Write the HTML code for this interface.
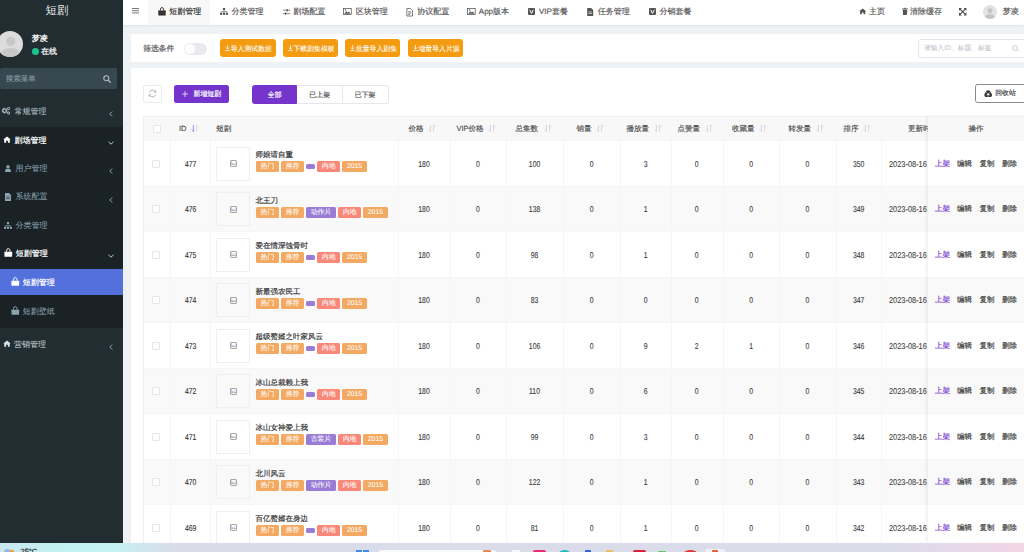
<!DOCTYPE html>
<html><head><meta charset="utf-8"><style>
*{margin:0;padding:0;box-sizing:border-box}
html,body{width:1024px;height:552px;overflow:hidden}
body{position:relative;text-rendering:geometricPrecision;-webkit-text-stroke-width:0.18px;background:#eff2f5;font-family:"Liberation Sans",sans-serif;color:#555}
.a{position:absolute}
.t{position:absolute;white-space:nowrap;line-height:1}
svg{position:absolute;overflow:visible}
/* sidebar */
#sb{position:absolute;left:0;top:0;width:123px;height:543px;background:#222d32}
#sb .logo{left:45.5px;top:6.2px;font-size:11.4px;color:#e8eaeb;-webkit-text-stroke-width:0}
#sb .av{left:-3px;top:31px;width:26px;height:26px;border-radius:50%;background:#dcdcdc;overflow:hidden}
#sb .uname{left:31.7px;top:34.8px;font-size:8px;color:#fff;-webkit-text-stroke-width:0.25px}
#sb .dot{position:absolute;left:32px;top:47.5px;width:7px;height:7px;border-radius:50%;background:#1fc28f}
#sb .online{left:41px;top:47.8px;font-size:8px;color:#fff}
#sb .search{position:absolute;left:0;top:68px;width:117px;height:21px;background:#374850;border-radius:2px}
#sb .ph{left:6px;top:6.8px;font-size:7.4px;color:#7f939b}
.mi{font-size:8px;color:#8aa4af;-webkit-text-stroke-width:0.05px}
.mi.w{color:#fff;-webkit-text-stroke-width:0.2px}
#sb .dark{position:absolute;left:0;top:126.5px;width:123px;height:201.5px;background:#1a2226}
#sb .actbg{position:absolute;left:0;top:269px;width:123px;height:25.6px;background:#5470dc}
/* topbar */
#tb{position:absolute;left:123px;top:0;width:901px;height:25px;background:#fff;box-shadow:0 0.6px 2.2px rgba(0,0,0,.11)}
#tb .acttab{position:absolute;left:25.2px;top:0;width:62px;height:25px;background:#f8f8f8}
.nv{font-size:8px;color:#5a5a5a;top:8.1px}
.nv.d{color:#333}
/* cards */
.card{position:absolute;background:#fff;border-radius:2px}
.obtn{position:absolute;top:39px;height:18.3px;background:#f39c12;border-radius:3px;color:#fff;-webkit-text-stroke-width:0.08px}
.toggle{position:absolute;left:184px;top:43px;width:23px;height:11.5px;border-radius:6px;background:#e8eaee}
.toggle b{position:absolute;left:1px;top:1px;width:9.5px;height:9.5px;border-radius:50%;background:#fff}
.sinp{position:absolute;left:917.6px;top:39px;width:120px;height:19px;border:1px solid #e2e5ec;border-radius:3px;background:#fff}
.sinp .t{left:5.5px;top:5.7px;font-size:6.75px;color:#bfc3cb;-webkit-text-stroke-width:0.05px}
/* toolbar */
.rbtn{position:absolute;left:143.4px;top:84.5px;width:18.2px;height:18.2px;border:1px solid #ececec;border-radius:2px;background:#fff}
.abtn{position:absolute;left:173.7px;top:84.7px;width:55.3px;height:18.3px;background:#7535cc;border-radius:2.5px;color:#fff}
.seg{position:absolute;top:85px;height:18.5px;font-size:6.9px;line-height:19.6px;text-align:center;border:1px solid #e6e7ec;background:#fff;color:#5a5a5a}
.seg.on{background:#7535cc;border-color:#7535cc;color:#fff}
.recbtn{position:absolute;left:974.5px;top:84.4px;width:60px;height:18.4px;border:0.8px solid #8a8a8a;border-radius:2.5px;background:#fff}
/* table */
#tbl{position:absolute;left:143px;top:116px;width:900px;height:427px;overflow:hidden}
.hdr{position:absolute;left:0;top:0;width:900px;height:24.3px;background:#f8f8f9;border-top:1px solid #eff1f6}
.hdr .vb{top:0;height:24.3px}
.ht{position:absolute;top:8.1px;font-size:7.5px;line-height:1;color:#555;white-space:nowrap}
.row{position:absolute;left:0;width:900px;height:45.5px;border-top:0.5px solid #f6f6f8}
.vb{position:absolute;top:0;width:0.6px;height:100%;background:#f5f6f9}
.cb{position:absolute;width:8.2px;height:8.2px;border:0.8px solid #e4e6ec;border-radius:1px;background:#fff}
.num{position:absolute;top:18.3px;font-size:8.5px;line-height:1;text-align:center;color:#3a3a3a;transform:scaleX(0.81);-webkit-text-stroke-width:0.1px}
.idn{color:#333}
.thumb{position:absolute;top:5.6px;width:34px;height:34px;border:0.8px solid #efefef;background:transparent}
.ttl{position:absolute;left:112.5px;top:9.9px;font-size:7.5px;line-height:1;color:#333;white-space:nowrap}
.tags{position:absolute;left:113px;top:19.9px;height:11px;white-space:nowrap;font-size:0}
.tg{display:inline-block;vertical-align:top;height:11px;line-height:11px;padding:0 4.6px;margin-right:2.1px;font-size:6.9px;font-style:normal;color:#fff;border-radius:1.5px;-webkit-text-stroke-width:0.05px}
.tg.o{background:#f3a961}
.tg.r{background:#f98878}
.tg.p{background:#9a7cd6}
.tg.pe{background:#9a7cd6;width:9px;height:4.8px;margin-top:3.1px;padding:0;border-radius:1.5px}
.date{position:absolute;left:746.4px;top:18.3px;font-size:8.5px;line-height:1;color:#444;transform:scaleX(0.87);transform-origin:0 0;-webkit-text-stroke-width:0.1px;white-space:nowrap}
#fix{position:absolute;left:927.6px;top:116px;width:120px;height:427px;overflow:hidden;box-shadow:-2px 0 3px rgba(0,0,0,.06)}
.frow{position:absolute;left:0;width:120px;height:45.5px;border-top:0.5px solid #f6f6f8}
.act{position:absolute;top:18.6px;font-size:7.5px;line-height:1;color:#444;white-space:nowrap}
.act.up{color:#7535cc}
/* taskbar */
#task{position:absolute;left:0;top:543.3px;width:1024px;height:9px;overflow:hidden;background:linear-gradient(90deg,#c7e8ee 0%,#c3f3f4 7%,#c4f2f3 11%,#cfe6ee 14%,#d9dce8 17%,#dadde9 50%,#dadce9 86%,#e3d9ea 92%,#f3d5e5 100%);box-shadow:0 -0.5px 1px rgba(0,0,0,.25)}
#task i{position:absolute;display:block}
.bimg{position:absolute;left:13.3px;top:12.8px;width:6px;height:6px;border:0.8px solid #9a9a9a;border-radius:0.5px}
.bimg:after{content:"";position:absolute;left:0.6px;top:2.6px;width:3.6px;height:0;border-top:0.8px solid #9a9a9a}
#tbl:before{content:"";position:absolute;left:0;top:0;width:0.7px;height:100%;background:#eceef3;z-index:5}

</style></head><body>
<div id="sb">
  <div class="t logo">短剧</div>
  <div class="av a"><svg width="26" height="26" viewBox="0 0 26 26" style="left:0;top:0"><circle cx="13.7" cy="10.5" r="4.6" fill="#c8c8c8"/><ellipse cx="13.7" cy="24" rx="10" ry="7" fill="#c8c8c8"/></svg></div>
  <div class="t uname">梦凌</div>
  <span class="dot"></span><div class="t online">在线</div>
  <div class="search"><span class="t ph">搜索菜单</span>
    <svg width="8" height="8" style="left:103px;top:6.5px" viewBox="0 0 8 8"><circle cx="3.3" cy="3.3" r="2.5" fill="none" stroke="#b0b8bc" stroke-width="1.1"/><path d="M5.2 5.2 L7.3 7.3" stroke="#b0b8bc" stroke-width="1.3" stroke-linecap="round"/></svg>
  </div>
  <div class="dark"></div>
  <div class="actbg"></div>
  <!-- 常规管理 -->
  <svg width="8" height="7" style="left:2px;top:107px" viewBox="0 0 8 7"><circle cx="2.6" cy="3.6" r="2.1" fill="none" stroke="#c0ccd2" stroke-width="1.4" stroke-dasharray="0.9 0.35"/><circle cx="2.6" cy="3.6" r="1.5" fill="none" stroke="#c0ccd2" stroke-width="0.6"/><circle cx="6.6" cy="1.5" r="1.1" fill="none" stroke="#b8c7ce" stroke-width="1"/><circle cx="6.6" cy="6" r="1.1" fill="none" stroke="#b8c7ce" stroke-width="1"/></svg>
  <div class="t mi" style="left:14.5px;top:107.6px;color:#b8c7ce">常规管理</div>
  <svg width="4" height="6" style="left:108.5px;top:110.5px" viewBox="0 0 4 6"><path d="M3.2 0.5 L0.8 3 L3.2 5.5" fill="none" stroke="#8aa4af" stroke-width="1"/></svg>
  <!-- 剧场管理 -->
  <svg width="8" height="7" style="left:2.5px;top:136px" viewBox="0 0 8 7"><path d="M0.3 3.6 L4 0.4 L7.7 3.6 L6.8 3.6 L6.8 6.8 L4.9 6.8 L4.9 4.8 L3.1 4.8 L3.1 6.8 L1.2 6.8 L1.2 3.6Z" fill="#fff"/></svg>
  <div class="t mi w" style="left:14.5px;top:136.5px">剧场管理</div>
  <svg width="6" height="4" style="left:107.5px;top:140.5px" viewBox="0 0 6 4"><path d="M0.5 0.8 L3 3.2 L5.5 0.8" fill="none" stroke="#b8c7ce" stroke-width="1"/></svg>
  <!-- 用户管理 -->
  <svg width="6" height="7" style="left:4.5px;top:165px" viewBox="0 0 6 7"><circle cx="3" cy="1.8" r="1.7" fill="#8aa4af"/><path d="M0 7 C0 4 1 3.7 3 3.7 C5 3.7 6 4 6 7Z" fill="#8aa4af"/></svg>
  <div class="t mi" style="left:15.6px;top:164.5px">用户管理</div>
  <svg width="4" height="6" style="left:108.5px;top:168.0px" viewBox="0 0 4 6"><path d="M3.2 0.5 L0.8 3 L3.2 5.5" fill="none" stroke="#8aa4af" stroke-width="1"/></svg>
  <!-- 系统配置 -->
  <svg width="6" height="8" style="left:4.5px;top:192.5px" viewBox="0 0 6 8"><path d="M0 0 H4 L6 2 V8 H0Z" fill="#8aa4af"/><path d="M1.2 4 H4.8 M1.2 5.6 H4.8" stroke="#1a2226" stroke-width="0.6"/></svg>
  <div class="t mi" style="left:15.6px;top:193px">系统配置</div>
  <svg width="4" height="6" style="left:108.5px;top:196.5px" viewBox="0 0 4 6"><path d="M3.2 0.5 L0.8 3 L3.2 5.5" fill="none" stroke="#8aa4af" stroke-width="1"/></svg>
  <!-- 分类管理 -->
  <svg width="8" height="7" style="left:3.5px;top:222px" viewBox="0 0 8 7"><rect x="2.9" y="0" width="2.2" height="2" fill="#8aa4af"/><path d="M4 2 V3.6 M1.2 4.8 V3.6 H6.8 V4.8 M4 3.6 V4.8" stroke="#8aa4af" stroke-width="0.6" fill="none"/><rect x="0" y="4.8" width="2.2" height="2" fill="#8aa4af"/><rect x="2.9" y="4.8" width="2.2" height="2" fill="#8aa4af"/><rect x="5.8" y="4.8" width="2.2" height="2" fill="#8aa4af"/></svg>
  <div class="t mi" style="left:15.6px;top:221.5px">分类管理</div>
  <!-- 短剧管理 parent -->
  <svg width="8.6" height="9" style="left:3.6px;top:248.3px" viewBox="0 0 8 8.6"><path d="M0.2 3.6 H7.8 L7.6 8.4 H0.4Z" fill="#fff"/><path d="M2.2 3.6 L2.7 1.2 Q4 -0.2 5.3 1.2 L5.8 3.6" fill="none" stroke="#fff" stroke-width="0.9"/></svg>
  <div class="t mi w" style="left:15.8px;top:249.5px">短剧管理</div>
  <svg width="6" height="4" style="left:107.5px;top:253.5px" viewBox="0 0 6 4"><path d="M0.5 0.8 L3 3.2 L5.5 0.8" fill="none" stroke="#b8c7ce" stroke-width="1"/></svg>
  <!-- active -->
  <svg width="8.6" height="9" style="left:10.6px;top:277.4px" viewBox="0 0 8 8.6"><path d="M0.2 3.6 H7.8 L7.6 8.4 H0.4Z" fill="#fff"/><path d="M2.2 3.6 L2.7 1.2 Q4 -0.2 5.3 1.2 L5.8 3.6" fill="none" stroke="#fff" stroke-width="0.9"/></svg>
  <div class="t mi w" style="left:22.8px;top:279px">短剧管理</div>
  <!-- 短剧壁纸 -->
  <svg width="8.6" height="9" style="left:10.6px;top:306.4px" viewBox="0 0 8 8.6"><path d="M0.2 3.6 H7.8 L7.6 8.4 H0.4Z" fill="#8aa4af"/><path d="M2.2 3.6 L2.7 1.2 Q4 -0.2 5.3 1.2 L5.8 3.6" fill="none" stroke="#8aa4af" stroke-width="0.9"/></svg>
  <div class="t mi" style="left:22.8px;top:307.6px">短剧壁纸</div>
  <!-- 营销管理 -->
  <svg width="8" height="7" style="left:2.5px;top:340px" viewBox="0 0 8 7"><path d="M0.3 3.6 L4 0.4 L7.7 3.6 L6.8 3.6 L6.8 6.8 L4.9 6.8 L4.9 4.8 L3.1 4.8 L3.1 6.8 L1.2 6.8 L1.2 3.6Z" fill="#d8e0e4"/></svg>
  <div class="t mi" style="left:14px;top:340.5px;color:#c4d0d5">营销管理</div>
  <svg width="4" height="6" style="left:108.5px;top:343.5px" viewBox="0 0 4 6"><path d="M3.2 0.5 L0.8 3 L3.2 5.5" fill="none" stroke="#8aa4af" stroke-width="1"/></svg>
</div>

<div id="tb">
  <div class="acttab"></div>
  <svg width="8" height="6" style="left:9px;top:8.1px" viewBox="0 0 8 6"><path d="M0 0.5 H7 M0 2.7 H7 M0 4.9 H7" stroke="#606060" stroke-width="0.85"/></svg>
  <svg width="8" height="8.6" style="left:35px;top:6.6px" viewBox="0 0 8 8.6"><path d="M0.2 3.6 H7.8 L7.6 8.4 H0.4Z" fill="#2a2a2a"/><path d="M2.2 3.6 L2.7 1.2 Q4 -0.2 5.3 1.2 L5.8 3.6" fill="none" stroke="#2a2a2a" stroke-width="0.9"/><path d="M0.6 6.2 H7.4" stroke="#777" stroke-width="0.4"/></svg>
  <div class="t nv d" style="left:46.3px">短剧管理</div>
  <svg width="8" height="7" style="left:97px;top:8px" viewBox="0 0 8 7"><rect x="2.9" y="0" width="2.2" height="2" fill="#555"/><path d="M4 2 V3.6 M1.2 4.8 V3.6 H6.8 V4.8 M4 3.6 V4.8" stroke="#555" stroke-width="0.6" fill="none"/><rect x="0" y="4.8" width="2.2" height="2" fill="#555"/><rect x="2.9" y="4.8" width="2.2" height="2" fill="#555"/><rect x="5.8" y="4.8" width="2.2" height="2" fill="#555"/></svg>
  <div class="t nv" style="left:108.4px">分类管理</div>
  <svg width="7" height="6" style="left:159.6px;top:8.8px" viewBox="0 0 7 6"><path d="M0 1.2 H7 M0 4.6 H7" stroke="#555" stroke-width="0.7"/><path d="M4.2 0 V2.4 M2.6 3.4 V5.8" stroke="#555" stroke-width="1.2"/></svg>
  <div class="t nv" style="left:170.3px">剧场配置</div>
  <svg width="8.6" height="7" style="left:220.3px;top:8.3px" viewBox="0 0 9 7"><rect x="0.4" y="0.4" width="8.2" height="6.2" fill="none" stroke="#555" stroke-width="0.8"/><path d="M1.2 5.8 L3.5 3.2 L5 4.6 L6.2 3.6 L7.8 5.8Z" fill="#555"/><circle cx="2.6" cy="2" r="0.8" fill="#555"/></svg>
  <div class="t nv" style="left:232.8px">区块管理</div>
  <svg width="7.4" height="8.5" style="left:283.2px;top:7.5px" viewBox="0 0 7 9"><path d="M0.5 0.5 H4.5 L6.5 2.5 V8.5 H0.5Z" fill="none" stroke="#555" stroke-width="0.8"/><path d="M1.8 4 H5 M1.8 5.5 H5 M1.8 7 H4" stroke="#555" stroke-width="0.7"/></svg>
  <div class="t nv" style="left:294.3px">协议配置</div>
  <svg width="8.6" height="7" style="left:344.3px;top:8.3px" viewBox="0 0 9 7"><rect x="0.4" y="0.4" width="8.2" height="6.2" fill="none" stroke="#555" stroke-width="0.8"/><path d="M1.2 5.8 L3.5 3.2 L5 4.6 L6.2 3.6 L7.8 5.8Z" fill="#555"/><circle cx="2.6" cy="2" r="0.8" fill="#555"/></svg>
  <div class="t nv" style="left:355.8px">App版本</div>
  <svg width="7" height="7" style="left:405.2px;top:8.2px" viewBox="0 0 7 7"><rect x="0" y="0" width="7" height="7" rx="1" fill="#555"/><path d="M1.7 1.8 L3.5 5.4 L5.3 1.8" fill="none" stroke="#fff" stroke-width="1"/></svg>
  <div class="t nv" style="left:416px">VIP套餐</div>
  <svg width="6.4" height="8" style="left:464.4px;top:7.8px" viewBox="0 0 6 8"><path d="M0 0 H4 L6 2 V8 H0Z" fill="#555"/><path d="M1.2 4 H4.8 M1.2 5.6 H4.8" stroke="#fff" stroke-width="0.6"/></svg>
  <div class="t nv" style="left:474.7px">任务管理</div>
  <svg width="7" height="7" style="left:525.9px;top:8.2px" viewBox="0 0 7 7"><rect x="0" y="0" width="7" height="7" rx="1" fill="#555"/><path d="M1.7 1.8 L3.5 5.4 L5.3 1.8" fill="none" stroke="#fff" stroke-width="1"/></svg>
  <div class="t nv" style="left:536.6px">分销套餐</div>
  <!-- right -->
  <svg width="7.4" height="6.5" style="left:736.2px;top:7.9px" viewBox="0 0 8 7"><path d="M0.3 3.6 L4 0.4 L7.7 3.6 L6.8 3.6 L6.8 6.8 L4.9 6.8 L4.9 4.8 L3.1 4.8 L3.1 6.8 L1.2 6.8 L1.2 3.6Z" fill="#555"/></svg>
  <div class="t nv" style="left:746px">主页</div>
  <svg width="6" height="7" style="left:778.5px;top:8.3px" viewBox="0 0 6 7"><path d="M0 1 H6 M2 1 V0.3 H4 V1" stroke="#555" stroke-width="0.8" fill="none"/><path d="M0.7 1.8 H5.3 L4.9 7 H1.1Z" fill="#555"/></svg>
  <div class="t nv" style="left:787px">清除缓存</div>
  <svg width="7.4" height="7.4" style="left:835.8px;top:8.2px" viewBox="0 0 8 8"><path d="M0.6 0.6 L7.4 7.4 M7.4 0.6 L0.6 7.4" stroke="#444" stroke-width="1.1"/><path d="M0 0 H3 L0 3Z M8 0 H5 L8 3Z M0 8 H3 L0 5Z M8 8 H5 L8 5Z" fill="#444"/></svg>
  <div class="a" style="left:860.2px;top:4.9px;width:14px;height:14px;border-radius:50%;background:#e2e2e2;overflow:hidden"><svg width="14" height="14" viewBox="0 0 26 26" style="left:0;top:0"><circle cx="13" cy="10.5" r="4.6" fill="#c4c4c4"/><ellipse cx="13" cy="24" rx="10" ry="7" fill="#c4c4c4"/></svg></div>
  <div class="t nv" style="left:879.7px">梦凌</div>
</div>

<!-- card 1 -->
<div class="card" style="left:131px;top:34px;width:900px;height:28px"></div>
<div class="t" style="left:143.2px;top:44.6px;font-size:7.8px;color:#555">筛选条件</div>
<div class="toggle"><b></b></div>
<div class="obtn" style="left:220.2px;width:55.6px"><svg width="5" height="6" style="left:4.7px;top:6.2px" viewBox="0 0 5 6"><path d="M2.5 0 V4.2 M0.7 2.5 L2.5 4.2 L4.3 2.5 M0 5.6 H5" fill="none" stroke="#fff" stroke-width="0.7"/></svg><span class="t" style="left:10.5px;top:7.7px;font-size:6.87px">导入测试数据</span></div>
<div class="obtn" style="left:283px;width:55px"><svg width="5" height="6" style="left:4.7px;top:6.2px" viewBox="0 0 5 6"><path d="M2.5 0 V4.2 M0.7 2.5 L2.5 4.2 L4.3 2.5 M0 5.6 H5" fill="none" stroke="#fff" stroke-width="0.7"/></svg><span class="t" style="left:10.5px;top:7.7px;font-size:6.87px">下载剧集模板</span></div>
<div class="obtn" style="left:345.4px;width:55.1px"><svg width="5" height="6" style="left:4.7px;top:6.2px" viewBox="0 0 5 6"><path d="M2.5 0 V4.2 M0.7 2.5 L2.5 4.2 L4.3 2.5 M0 5.6 H5" fill="none" stroke="#fff" stroke-width="0.7"/></svg><span class="t" style="left:10.5px;top:7.7px;font-size:6.87px">批量导入剧集</span></div>
<div class="obtn" style="left:408px;width:55.4px"><svg width="5" height="6" style="left:4.7px;top:6.2px" viewBox="0 0 5 6"><path d="M2.5 0 V4.2 M0.7 2.5 L2.5 4.2 L4.3 2.5 M0 5.6 H5" fill="none" stroke="#fff" stroke-width="0.7"/></svg><span class="t" style="left:10.5px;top:7.7px;font-size:6.87px">增量导入片源</span></div>
<div class="sinp"><span class="t">请输入ID、标题、标签</span>
<svg width="7" height="7" style="left:93px;top:5.2px" viewBox="0 0 7 7"><circle cx="3" cy="3" r="2.4" fill="none" stroke="#c0c4cc" stroke-width="0.8"/><path d="M4.8 4.8 L6.5 6.5" stroke="#c0c4cc" stroke-width="0.8"/></svg></div>

<!-- card 2 -->
<div class="card" style="left:131px;top:68px;width:900px;height:480px"></div>
<div class="rbtn"><svg width="9" height="9" style="left:4px;top:3.6px" viewBox="0 0 9 9"><path d="M1.2 3.5 A3.5 3.5 0 0 1 7.6 3" fill="none" stroke="#a8a8a8" stroke-width="0.8"/><path d="M7.8 5.5 A3.5 3.5 0 0 1 1.4 6" fill="none" stroke="#a8a8a8" stroke-width="0.8"/><path d="M7.9 1.3 V3.3 H5.9" fill="none" stroke="#a8a8a8" stroke-width="0.8"/><path d="M1.1 7.7 V5.7 H3.1" fill="none" stroke="#a8a8a8" stroke-width="0.8"/></svg></div>
<div class="abtn"><svg width="6" height="6" style="left:8.8px;top:6.2px" viewBox="0 0 6 6"><path d="M3 0 V6 M0 3 H6" stroke="#fff" stroke-width="0.7"/></svg><span class="t" style="left:19.8px;top:7.4px;font-size:6.9px;color:#fff">新增短剧</span></div>
<div class="seg on" style="left:252px;width:45.4px;border-radius:2.5px 0 0 2.5px">全部</div>
<div class="seg" style="left:297.4px;width:45.6px;border-left:0">已上架</div>
<div class="seg" style="left:342.5px;width:46.2px;border-left:0;border-radius:0 2.5px 2.5px 0">已下架</div>
<div class="recbtn"><svg width="8.4" height="7.4" style="left:8.5px;top:4.9px" viewBox="0 0 10 8.8"><path d="M5 0.3 C6.5 0.3 7.2 1.3 8.2 3 C9.3 4.8 9.9 5.7 9.3 7 C8.7 8.3 7.5 8.3 5 8.3 C2.5 8.3 1.3 8.3 0.7 7 C0.1 5.7 0.7 4.8 1.8 3 C2.8 1.3 3.5 0.3 5 0.3Z" fill="#333"/><path d="M5 3.2 L7 6.4 H3Z" fill="#fff"/><path d="M2.2 2.6 L3.8 3.8 M7.8 2.6 L6.2 3.8 M5 9 V6.8" stroke="#fff" stroke-width="0.55"/></svg><span class="t" style="left:19.8px;top:5.4px;font-size:6.8px;color:#444">回收站</span></div>

<div id="tbl">
  <div class="hdr">
    <i class="vb" style="left:26.8px"></i><i class="vb" style="left:66.8px"></i><i class="vb" style="left:254.6px"></i><i class="vb" style="left:306.6px"></i><i class="vb" style="left:362.5px"></i><i class="vb" style="left:419.6px"></i><i class="vb" style="left:476.8px"></i><i class="vb" style="left:528px"></i><i class="vb" style="left:579.6px"></i><i class="vb" style="left:636px"></i><i class="vb" style="left:693px"></i><i class="vb" style="left:738.4px"></i>
    <span class="cb" style="left:9.5px;top:7.5px"></span>
    <span class="ht" style="left:36px">ID</span>
    <span class="ht" style="left:73.2px">短剧</span>
    <span class="ht" style="left:265.6px">价格</span>
    <span class="ht" style="left:313.5px">VIP价格</span>
    <span class="ht" style="left:372.6px">总集数</span>
    <span class="ht" style="left:433.5px">销量</span>
    <span class="ht" style="left:483.5px">播放量</span>
    <span class="ht" style="left:534.5px">点赞量</span>
    <span class="ht" style="left:589px">收藏量</span>
    <span class="ht" style="left:645.5px">转发量</span>
    <span class="ht" style="left:700.5px">排序</span>
    <span class="ht" style="left:765px">更新时间</span>
    <svg width="8" height="7" style="left:47.89999999999999px;top:8.4px" viewBox="0 0 8 7"><path d="M2.4 0 V6.6 L0.5 4.7" fill="none" stroke="#9a6ee0" stroke-width="0.8"/><path d="M5.6 6.6 V0 L7.5 1.9" fill="none" stroke="#cfcfd4" stroke-width="0.8"/></svg><svg width="8" height="7" style="left:285.2px;top:8.4px" viewBox="0 0 8 7"><path d="M2.4 0 V6.6 L0.5 4.7" fill="none" stroke="#cfcfd4" stroke-width="0.8"/><path d="M5.6 6.6 V0 L7.5 1.9" fill="none" stroke="#cfcfd4" stroke-width="0.8"/></svg><svg width="8" height="7" style="left:345.3px;top:8.4px" viewBox="0 0 8 7"><path d="M2.4 0 V6.6 L0.5 4.7" fill="none" stroke="#cfcfd4" stroke-width="0.8"/><path d="M5.6 6.6 V0 L7.5 1.9" fill="none" stroke="#cfcfd4" stroke-width="0.8"/></svg><svg width="8" height="7" style="left:401.09999999999997px;top:8.4px" viewBox="0 0 8 7"><path d="M2.4 0 V6.6 L0.5 4.7" fill="none" stroke="#cfcfd4" stroke-width="0.8"/><path d="M5.6 6.6 V0 L7.5 1.9" fill="none" stroke="#cfcfd4" stroke-width="0.8"/></svg><svg width="8" height="7" style="left:453.09999999999997px;top:8.4px" viewBox="0 0 8 7"><path d="M2.4 0 V6.6 L0.5 4.7" fill="none" stroke="#cfcfd4" stroke-width="0.8"/><path d="M5.6 6.6 V0 L7.5 1.9" fill="none" stroke="#cfcfd4" stroke-width="0.8"/></svg><svg width="8" height="7" style="left:510.90000000000003px;top:8.4px" viewBox="0 0 8 7"><path d="M2.4 0 V6.6 L0.5 4.7" fill="none" stroke="#cfcfd4" stroke-width="0.8"/><path d="M5.6 6.6 V0 L7.5 1.9" fill="none" stroke="#cfcfd4" stroke-width="0.8"/></svg><svg width="8" height="7" style="left:561.5999999999999px;top:8.4px" viewBox="0 0 8 7"><path d="M2.4 0 V6.6 L0.5 4.7" fill="none" stroke="#cfcfd4" stroke-width="0.8"/><path d="M5.6 6.6 V0 L7.5 1.9" fill="none" stroke="#cfcfd4" stroke-width="0.8"/></svg><svg width="8" height="7" style="left:616.1999999999999px;top:8.4px" viewBox="0 0 8 7"><path d="M2.4 0 V6.6 L0.5 4.7" fill="none" stroke="#cfcfd4" stroke-width="0.8"/><path d="M5.6 6.6 V0 L7.5 1.9" fill="none" stroke="#cfcfd4" stroke-width="0.8"/></svg><svg width="8" height="7" style="left:673.3px;top:8.4px" viewBox="0 0 8 7"><path d="M2.4 0 V6.6 L0.5 4.7" fill="none" stroke="#cfcfd4" stroke-width="0.8"/><path d="M5.6 6.6 V0 L7.5 1.9" fill="none" stroke="#cfcfd4" stroke-width="0.8"/></svg><svg width="8" height="7" style="left:720.0999999999999px;top:8.4px" viewBox="0 0 8 7"><path d="M2.4 0 V6.6 L0.5 4.7" fill="none" stroke="#cfcfd4" stroke-width="0.8"/><path d="M5.6 6.6 V0 L7.5 1.9" fill="none" stroke="#cfcfd4" stroke-width="0.8"/></svg>
  </div>
  <div class="row" style="top:24.3px;background:#fff"><i class="vb" style="left:26.80000000000001px"></i><i class="vb" style="left:66.80000000000001px"></i><i class="vb" style="left:254.60000000000002px"></i><i class="vb" style="left:306.6px"></i><i class="vb" style="left:362.5px"></i><i class="vb" style="left:419.6px"></i><i class="vb" style="left:476.79999999999995px"></i><i class="vb" style="left:528px"></i><i class="vb" style="left:579.6px"></i><i class="vb" style="left:636px"></i><i class="vb" style="left:693px"></i><i class="vb" style="left:738.4px"></i><span class="cb" style="left:9.199999999999989px;top:18.25px"></span><span class="num idn" style="left:27.5px;width:39.30000000000001px">477</span><span class="thumb" style="left:73px"><svg width="7" height="7" style="left:12.7px;top:12.3px" viewBox="0 0 7 7"><rect x="0.5" y="0.5" width="6" height="6" rx="0.6" fill="none" stroke="#8f8f8f" stroke-width="0.8"/><path d="M0.8 4.6 H6.2" stroke="#9a9a9a" stroke-width="0.7"/><path d="M1.6 1.4 V3.6 L3.4 3.6 M4.6 3.6 L5.6 2.2" fill="none" stroke="#8a9ad0" stroke-width="0.6"/></svg></span><span class="ttl">师娘请自重</span><span class="tags"><em class="tg o">热门</em><em class="tg o">推荐</em><em class="tg pe"></em><em class="tg r">内地</em><em class="tg o">2015</em></span><span class="num" style="left:254.60000000000002px;width:52.0px">180</span><span class="num" style="left:306.6px;width:55.89999999999998px">0</span><span class="num" style="left:362.5px;width:57.10000000000002px">100</span><span class="num" style="left:419.6px;width:57.19999999999993px">0</span><span class="num" style="left:476.79999999999995px;width:51.200000000000045px">3</span><span class="num" style="left:528px;width:51.60000000000002px">0</span><span class="num" style="left:579.6px;width:56.39999999999998px">0</span><span class="num" style="left:636px;width:57px">0</span><span class="num" style="left:693px;width:45.39999999999998px">350</span><span class="date">2023-08-16</span></div><div class="row" style="top:69.8px;background:#f9f9f9"><i class="vb" style="left:26.80000000000001px"></i><i class="vb" style="left:66.80000000000001px"></i><i class="vb" style="left:254.60000000000002px"></i><i class="vb" style="left:306.6px"></i><i class="vb" style="left:362.5px"></i><i class="vb" style="left:419.6px"></i><i class="vb" style="left:476.79999999999995px"></i><i class="vb" style="left:528px"></i><i class="vb" style="left:579.6px"></i><i class="vb" style="left:636px"></i><i class="vb" style="left:693px"></i><i class="vb" style="left:738.4px"></i><span class="cb" style="left:9.199999999999989px;top:18.25px"></span><span class="num idn" style="left:27.5px;width:39.30000000000001px">476</span><span class="thumb" style="left:73px"><svg width="7" height="7" style="left:12.7px;top:12.3px" viewBox="0 0 7 7"><rect x="0.5" y="0.5" width="6" height="6" rx="0.6" fill="none" stroke="#8f8f8f" stroke-width="0.8"/><path d="M0.8 4.6 H6.2" stroke="#9a9a9a" stroke-width="0.7"/><path d="M1.6 1.4 V3.6 L3.4 3.6 M4.6 3.6 L5.6 2.2" fill="none" stroke="#8a9ad0" stroke-width="0.6"/></svg></span><span class="ttl">北王刀</span><span class="tags"><em class="tg o">热门</em><em class="tg o">推荐</em><em class="tg p">动作片</em><em class="tg r">内地</em><em class="tg o">2015</em></span><span class="num" style="left:254.60000000000002px;width:52.0px">180</span><span class="num" style="left:306.6px;width:55.89999999999998px">0</span><span class="num" style="left:362.5px;width:57.10000000000002px">138</span><span class="num" style="left:419.6px;width:57.19999999999993px">0</span><span class="num" style="left:476.79999999999995px;width:51.200000000000045px">1</span><span class="num" style="left:528px;width:51.60000000000002px">0</span><span class="num" style="left:579.6px;width:56.39999999999998px">0</span><span class="num" style="left:636px;width:57px">0</span><span class="num" style="left:693px;width:45.39999999999998px">349</span><span class="date">2023-08-16</span></div><div class="row" style="top:115.3px;background:#fff"><i class="vb" style="left:26.80000000000001px"></i><i class="vb" style="left:66.80000000000001px"></i><i class="vb" style="left:254.60000000000002px"></i><i class="vb" style="left:306.6px"></i><i class="vb" style="left:362.5px"></i><i class="vb" style="left:419.6px"></i><i class="vb" style="left:476.79999999999995px"></i><i class="vb" style="left:528px"></i><i class="vb" style="left:579.6px"></i><i class="vb" style="left:636px"></i><i class="vb" style="left:693px"></i><i class="vb" style="left:738.4px"></i><span class="cb" style="left:9.199999999999989px;top:18.25px"></span><span class="num idn" style="left:27.5px;width:39.30000000000001px">475</span><span class="thumb" style="left:73px"><svg width="7" height="7" style="left:12.7px;top:12.3px" viewBox="0 0 7 7"><rect x="0.5" y="0.5" width="6" height="6" rx="0.6" fill="none" stroke="#8f8f8f" stroke-width="0.8"/><path d="M0.8 4.6 H6.2" stroke="#9a9a9a" stroke-width="0.7"/><path d="M1.6 1.4 V3.6 L3.4 3.6 M4.6 3.6 L5.6 2.2" fill="none" stroke="#8a9ad0" stroke-width="0.6"/></svg></span><span class="ttl">爱在情深蚀骨时</span><span class="tags"><em class="tg o">热门</em><em class="tg o">推荐</em><em class="tg pe"></em><em class="tg r">内地</em><em class="tg o">2015</em></span><span class="num" style="left:254.60000000000002px;width:52.0px">180</span><span class="num" style="left:306.6px;width:55.89999999999998px">0</span><span class="num" style="left:362.5px;width:57.10000000000002px">98</span><span class="num" style="left:419.6px;width:57.19999999999993px">0</span><span class="num" style="left:476.79999999999995px;width:51.200000000000045px">1</span><span class="num" style="left:528px;width:51.60000000000002px">0</span><span class="num" style="left:579.6px;width:56.39999999999998px">0</span><span class="num" style="left:636px;width:57px">0</span><span class="num" style="left:693px;width:45.39999999999998px">348</span><span class="date">2023-08-16</span></div><div class="row" style="top:160.8px;background:#f9f9f9"><i class="vb" style="left:26.80000000000001px"></i><i class="vb" style="left:66.80000000000001px"></i><i class="vb" style="left:254.60000000000002px"></i><i class="vb" style="left:306.6px"></i><i class="vb" style="left:362.5px"></i><i class="vb" style="left:419.6px"></i><i class="vb" style="left:476.79999999999995px"></i><i class="vb" style="left:528px"></i><i class="vb" style="left:579.6px"></i><i class="vb" style="left:636px"></i><i class="vb" style="left:693px"></i><i class="vb" style="left:738.4px"></i><span class="cb" style="left:9.199999999999989px;top:18.25px"></span><span class="num idn" style="left:27.5px;width:39.30000000000001px">474</span><span class="thumb" style="left:73px"><svg width="7" height="7" style="left:12.7px;top:12.3px" viewBox="0 0 7 7"><rect x="0.5" y="0.5" width="6" height="6" rx="0.6" fill="none" stroke="#8f8f8f" stroke-width="0.8"/><path d="M0.8 4.6 H6.2" stroke="#9a9a9a" stroke-width="0.7"/><path d="M1.6 1.4 V3.6 L3.4 3.6 M4.6 3.6 L5.6 2.2" fill="none" stroke="#8a9ad0" stroke-width="0.6"/></svg></span><span class="ttl">新最强农民工</span><span class="tags"><em class="tg o">热门</em><em class="tg o">推荐</em><em class="tg pe"></em><em class="tg r">内地</em><em class="tg o">2015</em></span><span class="num" style="left:254.60000000000002px;width:52.0px">180</span><span class="num" style="left:306.6px;width:55.89999999999998px">0</span><span class="num" style="left:362.5px;width:57.10000000000002px">83</span><span class="num" style="left:419.6px;width:57.19999999999993px">0</span><span class="num" style="left:476.79999999999995px;width:51.200000000000045px">0</span><span class="num" style="left:528px;width:51.60000000000002px">0</span><span class="num" style="left:579.6px;width:56.39999999999998px">0</span><span class="num" style="left:636px;width:57px">0</span><span class="num" style="left:693px;width:45.39999999999998px">347</span><span class="date">2023-08-16</span></div><div class="row" style="top:206.3px;background:#fff"><i class="vb" style="left:26.80000000000001px"></i><i class="vb" style="left:66.80000000000001px"></i><i class="vb" style="left:254.60000000000002px"></i><i class="vb" style="left:306.6px"></i><i class="vb" style="left:362.5px"></i><i class="vb" style="left:419.6px"></i><i class="vb" style="left:476.79999999999995px"></i><i class="vb" style="left:528px"></i><i class="vb" style="left:579.6px"></i><i class="vb" style="left:636px"></i><i class="vb" style="left:693px"></i><i class="vb" style="left:738.4px"></i><span class="cb" style="left:9.199999999999989px;top:18.25px"></span><span class="num idn" style="left:27.5px;width:39.30000000000001px">473</span><span class="thumb" style="left:73px"><svg width="7" height="7" style="left:12.7px;top:12.3px" viewBox="0 0 7 7"><rect x="0.5" y="0.5" width="6" height="6" rx="0.6" fill="none" stroke="#8f8f8f" stroke-width="0.8"/><path d="M0.8 4.6 H6.2" stroke="#9a9a9a" stroke-width="0.7"/><path d="M1.6 1.4 V3.6 L3.4 3.6 M4.6 3.6 L5.6 2.2" fill="none" stroke="#8a9ad0" stroke-width="0.6"/></svg></span><span class="ttl">超级赘婿之叶家风云</span><span class="tags"><em class="tg o">热门</em><em class="tg o">推荐</em><em class="tg pe"></em><em class="tg r">内地</em><em class="tg o">2015</em></span><span class="num" style="left:254.60000000000002px;width:52.0px">180</span><span class="num" style="left:306.6px;width:55.89999999999998px">0</span><span class="num" style="left:362.5px;width:57.10000000000002px">106</span><span class="num" style="left:419.6px;width:57.19999999999993px">0</span><span class="num" style="left:476.79999999999995px;width:51.200000000000045px">9</span><span class="num" style="left:528px;width:51.60000000000002px">2</span><span class="num" style="left:579.6px;width:56.39999999999998px">1</span><span class="num" style="left:636px;width:57px">0</span><span class="num" style="left:693px;width:45.39999999999998px">346</span><span class="date">2023-08-16</span></div><div class="row" style="top:251.8px;background:#f9f9f9"><i class="vb" style="left:26.80000000000001px"></i><i class="vb" style="left:66.80000000000001px"></i><i class="vb" style="left:254.60000000000002px"></i><i class="vb" style="left:306.6px"></i><i class="vb" style="left:362.5px"></i><i class="vb" style="left:419.6px"></i><i class="vb" style="left:476.79999999999995px"></i><i class="vb" style="left:528px"></i><i class="vb" style="left:579.6px"></i><i class="vb" style="left:636px"></i><i class="vb" style="left:693px"></i><i class="vb" style="left:738.4px"></i><span class="cb" style="left:9.199999999999989px;top:18.25px"></span><span class="num idn" style="left:27.5px;width:39.30000000000001px">472</span><span class="thumb" style="left:73px"><svg width="7" height="7" style="left:12.7px;top:12.3px" viewBox="0 0 7 7"><rect x="0.5" y="0.5" width="6" height="6" rx="0.6" fill="none" stroke="#8f8f8f" stroke-width="0.8"/><path d="M0.8 4.6 H6.2" stroke="#9a9a9a" stroke-width="0.7"/><path d="M1.6 1.4 V3.6 L3.4 3.6 M4.6 3.6 L5.6 2.2" fill="none" stroke="#8a9ad0" stroke-width="0.6"/></svg></span><span class="ttl">冰山总裁赖上我</span><span class="tags"><em class="tg o">热门</em><em class="tg o">推荐</em><em class="tg pe"></em><em class="tg r">内地</em><em class="tg o">2015</em></span><span class="num" style="left:254.60000000000002px;width:52.0px">180</span><span class="num" style="left:306.6px;width:55.89999999999998px">0</span><span class="num" style="left:362.5px;width:57.10000000000002px">110</span><span class="num" style="left:419.6px;width:57.19999999999993px">0</span><span class="num" style="left:476.79999999999995px;width:51.200000000000045px">6</span><span class="num" style="left:528px;width:51.60000000000002px">0</span><span class="num" style="left:579.6px;width:56.39999999999998px">0</span><span class="num" style="left:636px;width:57px">0</span><span class="num" style="left:693px;width:45.39999999999998px">345</span><span class="date">2023-08-16</span></div><div class="row" style="top:297.3px;background:#fff"><i class="vb" style="left:26.80000000000001px"></i><i class="vb" style="left:66.80000000000001px"></i><i class="vb" style="left:254.60000000000002px"></i><i class="vb" style="left:306.6px"></i><i class="vb" style="left:362.5px"></i><i class="vb" style="left:419.6px"></i><i class="vb" style="left:476.79999999999995px"></i><i class="vb" style="left:528px"></i><i class="vb" style="left:579.6px"></i><i class="vb" style="left:636px"></i><i class="vb" style="left:693px"></i><i class="vb" style="left:738.4px"></i><span class="cb" style="left:9.199999999999989px;top:18.25px"></span><span class="num idn" style="left:27.5px;width:39.30000000000001px">471</span><span class="thumb" style="left:73px"><svg width="7" height="7" style="left:12.7px;top:12.3px" viewBox="0 0 7 7"><rect x="0.5" y="0.5" width="6" height="6" rx="0.6" fill="none" stroke="#8f8f8f" stroke-width="0.8"/><path d="M0.8 4.6 H6.2" stroke="#9a9a9a" stroke-width="0.7"/><path d="M1.6 1.4 V3.6 L3.4 3.6 M4.6 3.6 L5.6 2.2" fill="none" stroke="#8a9ad0" stroke-width="0.6"/></svg></span><span class="ttl">冰山女神爱上我</span><span class="tags"><em class="tg o">热门</em><em class="tg o">推荐</em><em class="tg p">古装片</em><em class="tg r">内地</em><em class="tg o">2015</em></span><span class="num" style="left:254.60000000000002px;width:52.0px">180</span><span class="num" style="left:306.6px;width:55.89999999999998px">0</span><span class="num" style="left:362.5px;width:57.10000000000002px">99</span><span class="num" style="left:419.6px;width:57.19999999999993px">0</span><span class="num" style="left:476.79999999999995px;width:51.200000000000045px">3</span><span class="num" style="left:528px;width:51.60000000000002px">0</span><span class="num" style="left:579.6px;width:56.39999999999998px">0</span><span class="num" style="left:636px;width:57px">0</span><span class="num" style="left:693px;width:45.39999999999998px">344</span><span class="date">2023-08-16</span></div><div class="row" style="top:342.8px;background:#f9f9f9"><i class="vb" style="left:26.80000000000001px"></i><i class="vb" style="left:66.80000000000001px"></i><i class="vb" style="left:254.60000000000002px"></i><i class="vb" style="left:306.6px"></i><i class="vb" style="left:362.5px"></i><i class="vb" style="left:419.6px"></i><i class="vb" style="left:476.79999999999995px"></i><i class="vb" style="left:528px"></i><i class="vb" style="left:579.6px"></i><i class="vb" style="left:636px"></i><i class="vb" style="left:693px"></i><i class="vb" style="left:738.4px"></i><span class="cb" style="left:9.199999999999989px;top:18.25px"></span><span class="num idn" style="left:27.5px;width:39.30000000000001px">470</span><span class="thumb" style="left:73px"><svg width="7" height="7" style="left:12.7px;top:12.3px" viewBox="0 0 7 7"><rect x="0.5" y="0.5" width="6" height="6" rx="0.6" fill="none" stroke="#8f8f8f" stroke-width="0.8"/><path d="M0.8 4.6 H6.2" stroke="#9a9a9a" stroke-width="0.7"/><path d="M1.6 1.4 V3.6 L3.4 3.6 M4.6 3.6 L5.6 2.2" fill="none" stroke="#8a9ad0" stroke-width="0.6"/></svg></span><span class="ttl">北川风云</span><span class="tags"><em class="tg o">热门</em><em class="tg o">推荐</em><em class="tg p">动作片</em><em class="tg r">内地</em><em class="tg o">2015</em></span><span class="num" style="left:254.60000000000002px;width:52.0px">180</span><span class="num" style="left:306.6px;width:55.89999999999998px">0</span><span class="num" style="left:362.5px;width:57.10000000000002px">122</span><span class="num" style="left:419.6px;width:57.19999999999993px">0</span><span class="num" style="left:476.79999999999995px;width:51.200000000000045px">1</span><span class="num" style="left:528px;width:51.60000000000002px">0</span><span class="num" style="left:579.6px;width:56.39999999999998px">0</span><span class="num" style="left:636px;width:57px">0</span><span class="num" style="left:693px;width:45.39999999999998px">343</span><span class="date">2023-08-16</span></div><div class="row" style="top:388.3px;background:#fff"><i class="vb" style="left:26.80000000000001px"></i><i class="vb" style="left:66.80000000000001px"></i><i class="vb" style="left:254.60000000000002px"></i><i class="vb" style="left:306.6px"></i><i class="vb" style="left:362.5px"></i><i class="vb" style="left:419.6px"></i><i class="vb" style="left:476.79999999999995px"></i><i class="vb" style="left:528px"></i><i class="vb" style="left:579.6px"></i><i class="vb" style="left:636px"></i><i class="vb" style="left:693px"></i><i class="vb" style="left:738.4px"></i><span class="cb" style="left:9.199999999999989px;top:18.25px"></span><span class="num idn" style="left:27.5px;width:39.30000000000001px">469</span><span class="thumb" style="left:73px"><svg width="7" height="7" style="left:12.7px;top:12.3px" viewBox="0 0 7 7"><rect x="0.5" y="0.5" width="6" height="6" rx="0.6" fill="none" stroke="#8f8f8f" stroke-width="0.8"/><path d="M0.8 4.6 H6.2" stroke="#9a9a9a" stroke-width="0.7"/><path d="M1.6 1.4 V3.6 L3.4 3.6 M4.6 3.6 L5.6 2.2" fill="none" stroke="#8a9ad0" stroke-width="0.6"/></svg></span><span class="ttl">百亿赘婿在身边</span><span class="tags"><em class="tg o">热门</em><em class="tg o">推荐</em><em class="tg pe"></em><em class="tg r">内地</em><em class="tg o">2015</em></span><span class="num" style="left:254.60000000000002px;width:52.0px">180</span><span class="num" style="left:306.6px;width:55.89999999999998px">0</span><span class="num" style="left:362.5px;width:57.10000000000002px">81</span><span class="num" style="left:419.6px;width:57.19999999999993px">0</span><span class="num" style="left:476.79999999999995px;width:51.200000000000045px">1</span><span class="num" style="left:528px;width:51.60000000000002px">0</span><span class="num" style="left:579.6px;width:56.39999999999998px">0</span><span class="num" style="left:636px;width:57px">0</span><span class="num" style="left:693px;width:45.39999999999998px">342</span><span class="date">2023-08-16</span></div>
</div>
<div id="fix">
  <div class="hdr" style="width:120px"><span class="ht" style="left:40.8px">操作</span></div>
  <div class="frow" style="top:24.3px;background:#fff"><span class="act up" style="left:7.4px">上架</span><span class="act" style="left:29.4px">编辑</span><span class="act" style="left:51.8px">复制</span><span class="act" style="left:74.3px">删除</span></div><div class="frow" style="top:69.8px;background:#f9f9f9"><span class="act up" style="left:7.4px">上架</span><span class="act" style="left:29.4px">编辑</span><span class="act" style="left:51.8px">复制</span><span class="act" style="left:74.3px">删除</span></div><div class="frow" style="top:115.3px;background:#fff"><span class="act up" style="left:7.4px">上架</span><span class="act" style="left:29.4px">编辑</span><span class="act" style="left:51.8px">复制</span><span class="act" style="left:74.3px">删除</span></div><div class="frow" style="top:160.8px;background:#f9f9f9"><span class="act up" style="left:7.4px">上架</span><span class="act" style="left:29.4px">编辑</span><span class="act" style="left:51.8px">复制</span><span class="act" style="left:74.3px">删除</span></div><div class="frow" style="top:206.3px;background:#fff"><span class="act up" style="left:7.4px">上架</span><span class="act" style="left:29.4px">编辑</span><span class="act" style="left:51.8px">复制</span><span class="act" style="left:74.3px">删除</span></div><div class="frow" style="top:251.8px;background:#f9f9f9"><span class="act up" style="left:7.4px">上架</span><span class="act" style="left:29.4px">编辑</span><span class="act" style="left:51.8px">复制</span><span class="act" style="left:74.3px">删除</span></div><div class="frow" style="top:297.3px;background:#fff"><span class="act up" style="left:7.4px">上架</span><span class="act" style="left:29.4px">编辑</span><span class="act" style="left:51.8px">复制</span><span class="act" style="left:74.3px">删除</span></div><div class="frow" style="top:342.8px;background:#f9f9f9"><span class="act up" style="left:7.4px">上架</span><span class="act" style="left:29.4px">编辑</span><span class="act" style="left:51.8px">复制</span><span class="act" style="left:74.3px">删除</span></div><div class="frow" style="top:388.3px;background:#fff"><span class="act up" style="left:7.4px">上架</span><span class="act" style="left:29.4px">编辑</span><span class="act" style="left:51.8px">复制</span><span class="act" style="left:74.3px">删除</span></div>
</div>
<div id="task">
<i style="left:4px;top:6px;width:7px;height:7px;border-radius:50%;background:#9bb0e8"></i><i style="left:9.5px;top:7.2px;width:4px;height:4px;border-radius:1px;background:#f0a030"></i>
<span class="t" style="left:20.5px;top:5.2px;font-size:7.5px;color:#222">25°C</span>
<i style="left:355.6px;top:6.6px;width:13px;height:6px;background:linear-gradient(90deg,#3b8fe8 0 45%,transparent 45% 55%,#3b8fe8 55%)"></i>
<i style="left:377px;top:6.3px;width:121px;height:10px;border-radius:5px;background:#fafafd;box-shadow:0 0 0.5px #bbb"></i>
<i style="left:483px;top:7px;width:8px;height:5px;background:#e78a52;border-radius:1px"></i>
<i style="left:512px;top:7px;width:8px;height:6px;background:#f7f7f9;border-radius:1px"></i>
<i style="left:533px;top:6.5px;width:13px;height:6px;background:#e8306e;border-radius:2px"></i>
<i style="left:559px;top:6.5px;width:11px;height:6px;background:#29b6c6;border-radius:50%"></i>
<i style="left:585px;top:7px;width:6px;height:6px;background:#2a6ad8;border-radius:1px"></i>
<i style="left:606px;top:7px;width:7px;height:6px;background:#e8c060;border-radius:1px"></i>
<i style="left:633px;top:6.5px;width:13px;height:6px;background:#d8203c;border-radius:2px"></i>
<i style="left:658px;top:7.5px;width:8px;height:5px;background:#66c070;border-radius:1px"></i>
<i style="left:684px;top:6.5px;width:13px;height:6px;background:#e03838;border-radius:50%"></i>
<i style="left:705px;top:5.3px;width:20px;height:8px;background:rgba(255,255,255,.6);border-radius:2px"></i>
<i style="left:712px;top:7px;width:6px;height:5px;background:#e06040;border-radius:1px"></i>
</div>

</body></html>
